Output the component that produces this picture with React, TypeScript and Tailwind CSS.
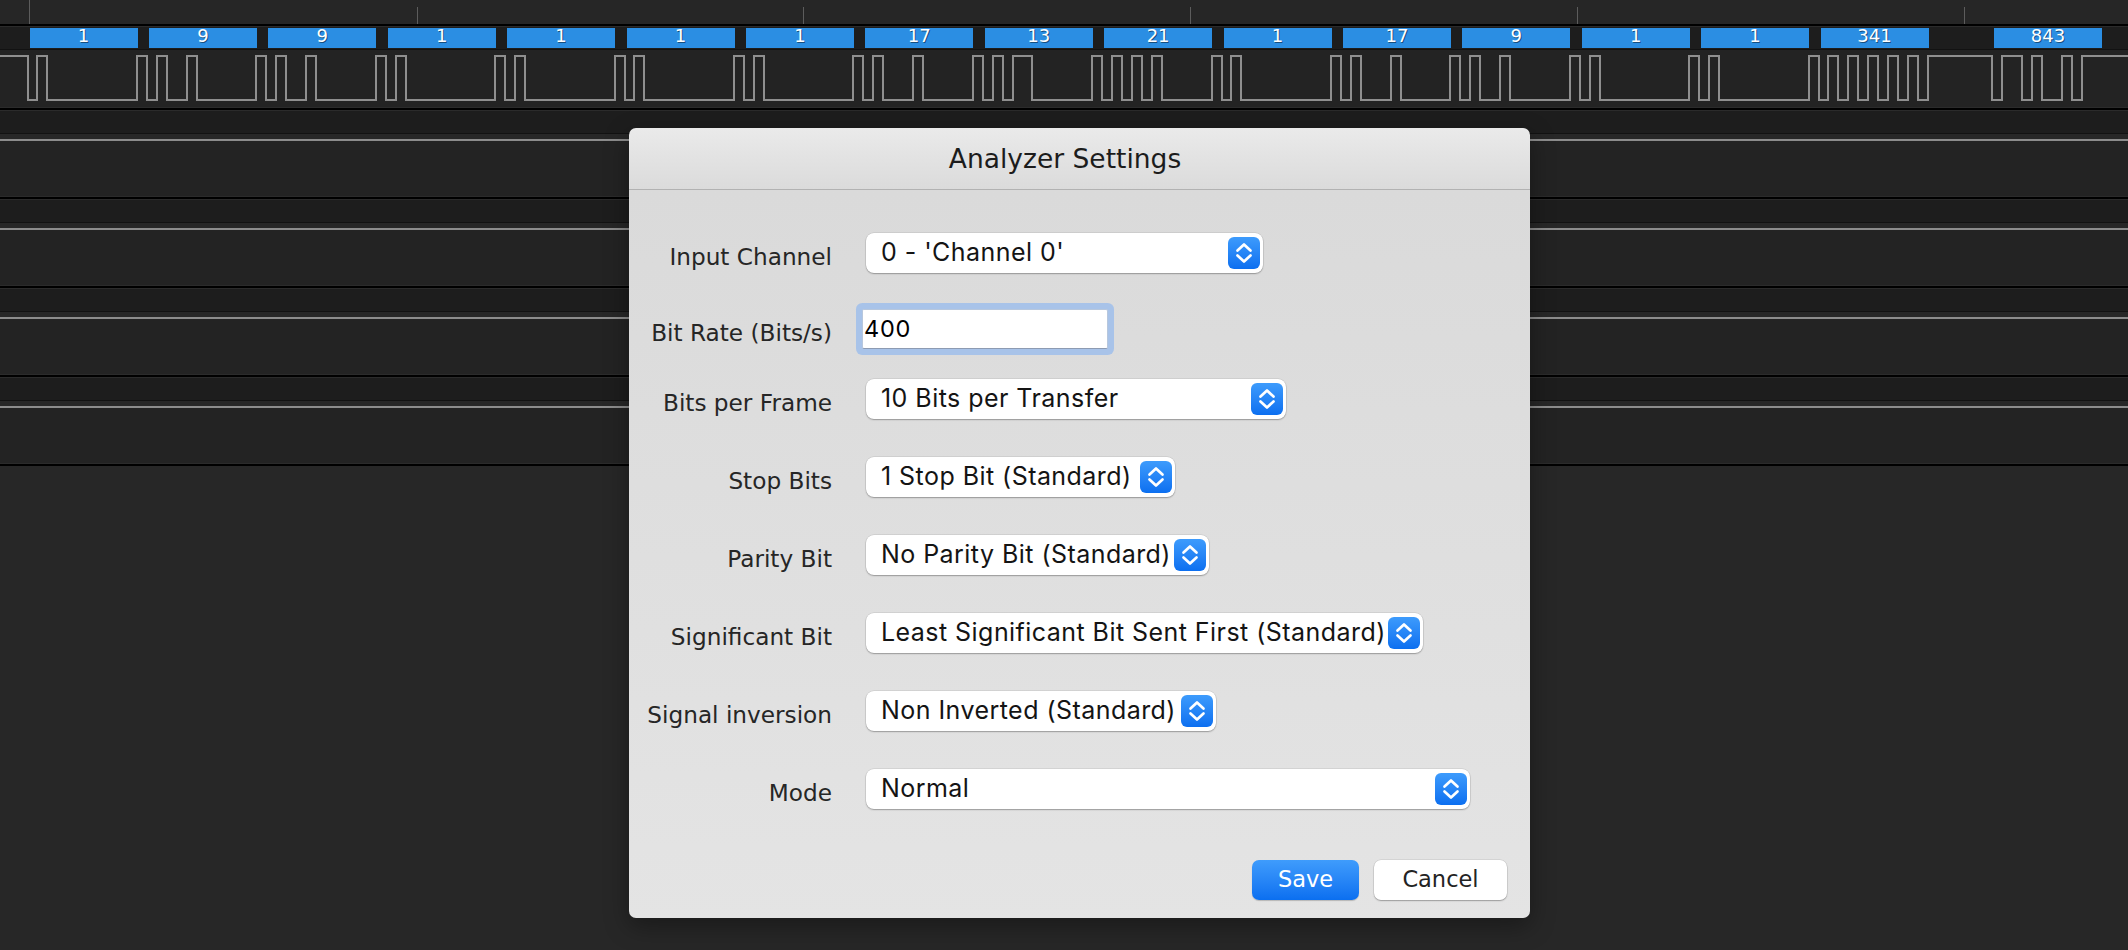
import React from "react";

const VALUES = [1, 9, 9, 1, 1, 1, 1, 17, 13, 21, 1, 17, 9, 1, 1, 341];
const FRAMES: { v: number; s: number }[] = [
  ...VALUES.map((v, i) => ({ v, s: 27.5 + 119.4 * i })),
  { v: 843, s: 1992 },
];
const BIT = 119.4 / 12;

function wavePath(high: number, low: number) {
  let d = `M0 ${high}`;
  let level = 1;
  const go = (x: number, lv: number) => {
    if (lv !== level) {
      d += ` H${Math.round(x)} V${lv ? high : low}`;
      level = lv;
    }
  };
  for (const f of FRAMES) {
    const bits = [0, ...Array.from({ length: 10 }, (_, k) => (f.v >> k) & 1), 1];
    bits.forEach((b, k) => go(f.s + k * BIT, b));
  }
  d += " H2128";
  return d;
}

const TICKS = [416.7, 802.7, 1190, 1577, 1964];
const TICK_LABELS = ["+0.2 s", "+0.4 s", "+0.6 s", "+0.8 s", "+1 s"];

function Ruler() {
  return (
    <div className="relative h-[24px] overflow-hidden bg-[#262626]">
      <div className="absolute left-[29px] top-0 h-[24px] w-px bg-[#5c5c5c]" />
      {TICKS.map((x, i) => (
        <div key={x} className="absolute top-0 h-[24px]" style={{ left: x }}>
          <div className="absolute left-0 top-[7px] h-[17px] w-px bg-[#5c5c5c]" />
          <div className="absolute left-[3px] top-[-11px] whitespace-nowrap font-['DejaVu_Sans',sans-serif] text-[13px] leading-[14px] text-[#9a9a9a]">
            {TICK_LABELS[i]}
          </div>
        </div>
      ))}
    </div>
  );
}

function Channel({ first }: { first?: boolean }) {
  return (
    <div>
      <div className="h-[2px] bg-black" />
      <div className="relative h-[23px] border-t border-[#2b2b2b] bg-[#1d1d1d]">
        {first &&
          FRAMES.map((f, i) => (
            <div
              key={i}
              className="absolute top-[1px] flex h-[20px] w-[108px] items-start justify-center bg-[#2b8ee3] font-['DejaVu_Sans',sans-serif] text-[18px] leading-[16px] text-white [text-shadow:1px_1px_0_rgba(0,0,0,0.45)]"
              style={{ left: f.s + 2 }}
            >
              {f.v}
            </div>
          ))}
      </div>
      <div className="h-px bg-[#121212]" />
      <div className="relative h-[58px] border-b border-[#2b2b2b] bg-[#232323]">
        {first ? (
          <svg width="2128" height="58" className="block" shapeRendering="crispEdges">
            <path d={wavePath(6, 50)} fill="none" stroke="#8f8f8f" strokeWidth="2" />
          </svg>
        ) : (
          <div className="mt-[5px] h-[2px] bg-[#8c8c8c]" />
        )}
      </div>
    </div>
  );
}

function Stepper() {
  return (
    <div className="flex h-[32px] w-[32px] shrink-0 items-center justify-center rounded-[6px] bg-linear-to-b from-[#3d9bfc] to-[#0b6ff0]">
      <svg width="32" height="32" viewBox="0 0 32 32">
        <path d="M9.5 13.5 L16 7.5 L22.5 13.5" fill="none" stroke="white" strokeWidth="2.7" strokeLinecap="round" strokeLinejoin="round" />
        <path d="M9.5 18.5 L16 24.5 L22.5 18.5" fill="none" stroke="white" strokeWidth="2.7" strokeLinecap="round" strokeLinejoin="round" />
      </svg>
    </div>
  );
}

function Popup({ text, w }: { text: string; w: string }) {
  return (
    <div
      className={`ml-[4px] flex h-[40px] items-center justify-between rounded-[8px] bg-white pl-[15px] pr-[3px] shadow-[0_1px_1.5px_rgba(0,0,0,0.28),0_0_0_0.5px_rgba(0,0,0,0.12)] ${w}`}
    >
      <span className="whitespace-nowrap font-[Inter,sans-serif] text-[25px] tracking-[0.45px] text-[#141414]">{text}</span>
      <Stepper />
    </div>
  );
}

function Row({ label, mt, children }: { label: string; mt: string; children: React.ReactNode }) {
  return (
    <div className={`flex h-[40px] items-center ${mt}`}>
      <div className="w-[203px] shrink-0 whitespace-nowrap pt-[8px] text-right font-['DejaVu_Sans',sans-serif] text-[23.2px] text-[#262626]">
        {label}
      </div>
      <div className="ml-[30px] flex">{children}</div>
    </div>
  );
}

function Dialog() {
  return (
    <div className="absolute left-[629px] top-[128px] flex h-[790px] w-[901px] flex-col overflow-hidden rounded-[7px] shadow-[0_8px_24px_rgba(0,0,0,0.35)]">
      <div className="flex h-[62px] shrink-0 items-center justify-center border-b border-[#b2b2b2] bg-linear-to-b from-[#eaeaea] to-[#dbdbdb] pr-[29px]">
        <span className="font-['DejaVu_Sans',sans-serif] text-[26.5px] text-[#1c1c1c]">Analyzer Settings</span>
      </div>
      <div className="flex flex-1 flex-col bg-linear-to-b from-[#dadada] to-[#e4e4e4] pt-[43px]">
        <Row label="Input Channel" mt="mt-0">
          <Popup text="0 - 'Channel 0'" w="w-[397px]" />
        </Row>
        <Row label="Bit Rate (Bits/s)" mt="mt-[36px]">
          <div className="flex h-[40px] w-[246px] items-center rounded-[2px] border border-[#b7c7dd] border-b-[#8d9bb2] bg-white shadow-[0_0_0_6px_#a8c3e9]">
            <span className="pl-px font-[Inter,sans-serif] text-[23.5px] tracking-[0.8px] text-black">400</span>
          </div>
        </Row>
        <Row label="Bits per Frame" mt="mt-[30px]">
          <Popup text="10 Bits per Transfer" w="w-[420px]" />
        </Row>
        <Row label="Stop Bits" mt="mt-[38px]">
          <Popup text="1 Stop Bit (Standard)" w="w-[309px]" />
        </Row>
        <Row label="Parity Bit" mt="mt-[38px]">
          <Popup text="No Parity Bit (Standard)" w="w-[343px]" />
        </Row>
        <Row label="Significant Bit" mt="mt-[38px]">
          <Popup text="Least Significant Bit Sent First (Standard)" w="w-[557px]" />
        </Row>
        <Row label="Signal inversion" mt="mt-[38px]">
          <Popup text="Non Inverted (Standard)" w="w-[350px]" />
        </Row>
        <Row label="Mode" mt="mt-[38px]">
          <Popup text="Normal" w="w-[604px]" />
        </Row>
        <div className="mt-[51px] flex justify-end gap-[15px] pr-[23px]">
          <button className="flex h-[40px] w-[107px] items-center justify-center rounded-[7px] bg-linear-to-b from-[#3f9cfc] to-[#0a6ff0] font-['DejaVu_Sans',sans-serif] text-[22.5px] text-white shadow-[0_1px_1px_rgba(0,0,0,0.2)]">
            Save
          </button>
          <button className="flex h-[40px] w-[133px] items-center justify-center rounded-[7px] bg-white font-['DejaVu_Sans',sans-serif] text-[22.5px] text-[#232323] shadow-[0_1px_1.5px_rgba(0,0,0,0.28),0_0_0_0.5px_rgba(0,0,0,0.12)]">
            Cancel
          </button>
        </div>
      </div>
    </div>
  );
}

export default function App() {
  return (
    <div className="relative h-[950px] w-[2128px] overflow-hidden bg-[#272727]">
      <Ruler />
      <Channel first />
      <Channel />
      <Channel />
      <Channel />
      <Channel />
      <div className="h-[2px] bg-black" />
      <Dialog />
    </div>
  );
}
